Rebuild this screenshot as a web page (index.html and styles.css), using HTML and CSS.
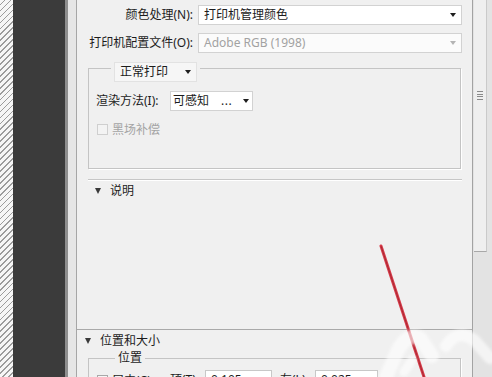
FILE: index.html
```html
<!DOCTYPE html>
<html lang="zh-CN">

<head>
  <meta charset="UTF-8">
  <meta name="viewport" content="width=device-width, initial-scale=1.0">
  <title>打印设置</title>
  <link rel="stylesheet" href="styles.css">
</head>

<body>
  <!-- 左侧：画布边缘 + 深色停靠区 -->
  <div class="hatch"></div>
  <div class="dock"></div>
  <div class="gutter"></div>

  <!-- 右侧设置面板 -->
  <div class="panel">
    <div class="form-grid">
      <span class="label">颜色处理(N):</span>
      <div class="select">打印机管理颜色<span class="arrow"></span></div>
      <span class="label">打印机配置文件(O):</span>
      <div class="select disabled">Adobe RGB (1998)<span class="arrow"></span></div>
    </div>

    <!-- 正常打印分组 -->
    <div class="group">
      <div class="legend">
        <div class="mini-select">正常打印<span class="arrow"></span></div>
      </div>
      <div class="row">
        <span class="label render-label">渲染方法(I):</span>
        <div class="select small">可感知<span class="dots">...</span><span class="arrow"></span></div>
      </div>
      <div class="check disabled"><span class="box"></span>黑场补偿</div>
    </div>

    <div class="divider"></div>

    <!-- 说明 -->
    <div class="desc">
      <div class="section-title"><span class="tri"></span>说明</div>
    </div>

    <!-- 位置和大小 -->
    <div class="section">
      <div class="section-title outdent"><span class="tri"></span>位置和大小</div>
      <div class="group position">
        <div class="legend text">位置</div>
        <div class="row">
          <div class="check center"><span class="box"></span>居中(C)</div>
          <span class="label pos-label">顶(T):</span>
          <div class="input">0.105</div>
          <span class="label pos-label left">左(L):</span>
          <div class="input narrow">0.025</div>
        </div>
      </div>
    </div>
  </div>

  <!-- 滚动条 -->
  <div class="scrollbar">
    <div class="thumb">
      <span class="grip"></span>
    </div>
  </div>

  <!-- 截图上的标注 -->
  <svg class="annotation" width="492" height="377" viewBox="0 0 492 377">
    <defs>
      <filter id="soft" x="-20%" y="-20%" width="140%" height="140%">
        <feGaussianBlur stdDeviation="1.5" />
      </filter>
    </defs>
    <line x1="381" y1="246" x2="424" y2="377" stroke="#d83a48" stroke-width="3" stroke-linecap="round" />
    <line x1="381" y1="246" x2="424" y2="377" stroke="#a82a36" stroke-width="1" />
    <g fill="none" stroke="#ffffff" stroke-linecap="round" stroke-linejoin="round" opacity="0.62" filter="url(#soft)">
      <path d="M386 377 L398 350 Q408 332 420 338 L432 356" stroke-width="14" />
      <path d="M446 346 Q458 328 474 340 L490 358" stroke-width="12" />
      <path d="M404 372 L412 360" stroke-width="9" />
    </g>
  </svg>
</body>

</html>
```

FILE: styles.css
```css
/* 整体布局 */
body {
  margin: 0;
  height: 377px;
  overflow: hidden;
  display: flex;
  background-color: #f0f0f0;
  font-family: "Noto Sans", "Noto Sans CJK SC", sans-serif;
  font-size: 12px;
  color: #1c1c1c;
  user-select: none;
}

/* 画布边缘的斜纹 */
.hatch {
  width: 13px;
  flex-shrink: 0;
  background: repeating-linear-gradient(135deg, #f6f6f6 0 3px, #9c9c9c 3px 4.2px);
}

.dock {
  width: 52px;
  flex-shrink: 0;
  background-color: #3b3b3b;
}

.gutter {
  width: 8px;
  flex-shrink: 0;
  border-left: 3px solid #8e8e8e;
  border-right: 1px solid #a6a6a6;
  background-color: #e6e6e6;
}

/* 设置面板 */
.panel {
  flex: 1;
  padding: 5px 10px 0 11px;
  background-color: #f0f0f0;
}

.form-grid {
  display: grid;
  grid-template-columns: 105px 1fr;
  column-gap: 5px;
  row-gap: 8px;
  align-items: center;
}

.form-grid .label {
  text-align: right;
  white-space: nowrap;
}

.label {
  line-height: 20px;
}

/* 下拉框 */
.select {
  height: 20px;
  box-sizing: border-box;
  display: flex;
  align-items: center;
  padding-left: 5px;
  background-color: #fff;
  border: 1px solid #d2d2d2;
  line-height: 18px;
}

.arrow {
  width: 0;
  height: 0;
  margin-left: auto;
  margin-right: 5px;
  border-left: 3.5px solid transparent;
  border-right: 3.5px solid transparent;
  border-top: 4px solid #1e1e1e;
}

.select.disabled {
  color: #a2a2a2;
  background-color: #fbfbfb;
}

.select.disabled .arrow {
  border-top-color: #b4b4b4;
  box-shadow: -10px 0 0 -9px #e0e0e0;
}

.select.small {
  width: 83px;
  padding-left: 2px;
}

.dots {
  margin-left: 12px;
  letter-spacing: 0.5px;
}

.small .arrow {
  margin-right: 3px;
}

/* 分组框 */
.group {
  margin-top: 15px;
  margin-right: 1px;
  padding: 0 0 29px 7px;
  border: 1px solid #c4c4c4;
  box-shadow: 1px 1px 0 #fff;
}

.legend {
  width: 83px;
  margin: -7px 0 0 15px;
  padding: 0 3px;
  background-color: #f0f0f0;
}

.mini-select {
  height: 20px;
  box-sizing: border-box;
  display: flex;
  align-items: center;
  padding-left: 5px;
  background-color: #f6f6f6;
  border: 1px solid #e2e2e2;
  line-height: 18px;
}

.row {
  display: flex;
  align-items: center;
  margin-top: 9px;
}

.render-label {
  width: 74px;
}

/* 复选框 */
.check {
  display: flex;
  align-items: center;
  height: 20px;
  margin-top: 8px;
  margin-left: 1px;
}

.box {
  width: 9px;
  height: 9px;
  margin-right: 4px;
  border: 1px solid #a8a8a8;
  background-color: #f6f6f6;
}

.check.disabled {
  color: #a4a4a4;
}

.check.disabled .box {
  border-color: #cfcfcf;
  background-color: #f3f3f3;
}

/* 分隔线 */
.divider {
  margin-top: 10px;
  border-top: 1px solid #c6c6c6;
  border-bottom: 1px solid #fff;
}

.desc {
  height: 146px;
}

.section-title {
  display: flex;
  align-items: center;
  margin-top: 2px;
  padding-left: 7px;
  line-height: 16px;
}

.tri {
  width: 0;
  height: 0;
  margin-right: 9px;
  border-left: 3px solid transparent;
  border-right: 3px solid transparent;
  border-top: 6px solid #3a3a3a;
}

/* 位置和大小 */
.section {
  margin: 0 -10px 0 -11px;
  padding: 0 10px 0 11px;
  border-top: 1px solid #a9a9a9;
}

.section-title.outdent {
  margin-top: 3px;
  padding-left: 0;
  margin-left: -3px;
}

.group.position {
  margin-top: 9px;
  padding: 0 0 0 8px;
}

.legend.text {
  width: fit-content;
  height: 16px;
  margin: -9px 0 0 18px;
  line-height: 16px;
}

.position .row {
  margin-top: 4px;
}

.check.center {
  width: 73px;
  margin: 0;
}

.pos-label {
  width: 35px;
  white-space: nowrap;
}

.pos-label.left {
  margin-left: 8px;
}

.input {
  width: 67px;
  height: 20px;
  box-sizing: border-box;
  padding-left: 5px;
  background-color: #fff;
  border: 1px solid #c8c8c8;
  line-height: 18px;
}

.input.narrow {
  width: 63px;
}

/* 滚动条 */
.scrollbar {
  width: 19px;
  flex-shrink: 0;
  border-left: 1px solid #a3a3a3;
  background-color: #e3e3e3;
}

.thumb {
  width: 12px;
  height: 251px;
  margin-left: 1px;
  position: relative;
  background-color: #efefef;
  border-right: 1px solid #cacaca;
  border-bottom: 1px solid #a8a8a8;
}

.grip {
  position: absolute;
  left: 3px;
  top: 91px;
  width: 6px;
  height: 9px;
  background: repeating-linear-gradient(180deg, #8a8a8a 0 1px, transparent 1px 2.5px);
}

/* 标注层 */
.annotation {
  position: absolute;
  top: 0;
  left: 0;
  pointer-events: none;
}
```
